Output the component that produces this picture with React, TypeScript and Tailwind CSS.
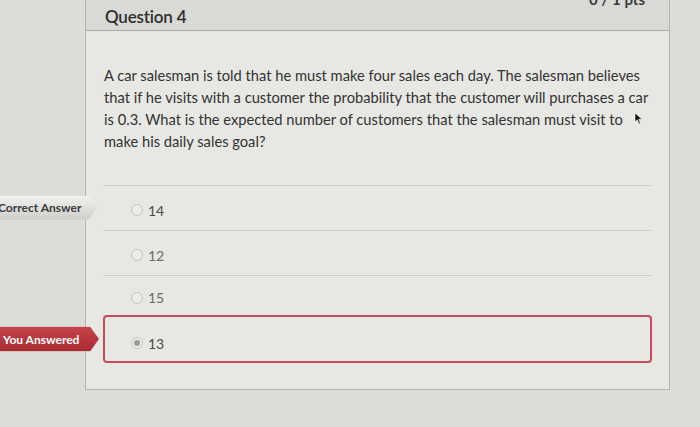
import React from 'react'

const answers = [
  { value: '14', badge: 'correct' },
  { value: '12' },
  { value: '15' },
  { value: '13', badge: 'you', selected: true },
]

function Radio({ selected }: { selected?: boolean }) {
  return (
    <span className="flex h-[12px] w-[12px] items-center justify-center rounded-full border border-[#c4c4c0] bg-[#ececE8]">
      {selected && <span className="h-[6px] w-[6px] rounded-full bg-[#9a9a96]" />}
    </span>
  )
}

function Badge({ kind }: { kind: string }) {
  if (kind === 'correct') {
    return (
      <div className="absolute left-[-110px] top-1/2 flex h-[24px] w-[104px] -translate-y-1/2 items-center bg-gradient-to-b from-[#f2f2f0] to-[#cdcdc9] pl-[5px] text-[12px] font-bold text-[#3c3c3c] [clip-path:polygon(0_0,calc(100%-9px)_0,100%_50%,calc(100%-9px)_100%,0_100%)]">
        Correct Answer
      </div>
    )
  }
  return (
    <div className="absolute left-[-110px] top-1/2 flex h-[25px] w-[104px] -translate-y-1/2 items-center bg-gradient-to-b from-[#c6434a] to-[#a92a32] pl-[8px] text-[12px] font-bold text-white [clip-path:polygon(0_0,calc(100%-9px)_0,100%_50%,calc(100%-9px)_100%,0_100%)]">
      You Answered
    </div>
  )
}

export default function App() {
  return (
    <div
      className="relative h-[427px] w-[700px] overflow-hidden bg-[#dcdcd8] pl-[85px] pr-[30px]"
      style={{ fontFamily: 'Lato, "Open Sans", sans-serif' }}
    >
      <div className="border-x border-b border-[#b4b4b0] bg-[#e7e7e3]">
        {/* header */}
        <div className="flex h-[31px] items-start justify-between border-b border-[#a9a9a5] bg-[#d9d9d5] pl-[19px] pr-[24px]">
          <span className="mt-[4px] text-[17px] font-semibold tracking-[-0.2px] text-[#2e2e2e]">Question 4</span>
          <span className="-mt-[12px] text-[15px] font-bold text-[#3a3a3a]">0 / 1 pts</span>
        </div>

        {/* question */}
        <div className="relative px-[18px] pb-[33px] pt-[33px] text-[14.7px] leading-[22px] text-[#333]">
          <p className="whitespace-nowrap">
            A car salesman is told that he must make four sales each day. The salesman believes
            <br />
            that if he visits with a customer the probability that the customer will purchases a car
            <br />
            is 0.3. What is the expected number of customers that the salesman must visit to
            <br />
            make his daily sales goal?
          </p>
          <svg
            className="absolute left-[548px] top-[81px]"
            width="9"
            height="13"
            viewBox="0 0 9 13"
          >
            <path d="M1 1 L1 10 L3.3 7.8 L5 12 L6.4 11.4 L4.8 7.3 L8 7.3 Z" fill="#111" stroke="#fff" strokeWidth="0.6" />
          </svg>
        </div>

        {/* answers */}
        <div className="mx-[17px] pb-[26px]">
          {answers.map((a, i) => {
            const you = a.badge === 'you'
            return (
              <div
                key={a.value}
                className={
                  you
                    ? 'relative flex h-[48px] items-center rounded-[4px] border-2 border-[#c8495a] pl-[26px] pt-[8px]'
                    : i === 2
                      ? 'relative flex h-[40px] items-center border-t border-[#cdcdc9] pl-[28px] pt-[4px]'
                      : 'relative flex h-[45px] items-center border-t border-[#cdcdc9] pl-[28px] pt-[4px]'
                }
              >
                {a.badge && <Badge kind={a.badge} />}
                <Radio selected={a.selected} />
                <span className={i === 0 || you ? 'ml-[5px] text-[14px] text-[#4a4a4a]' : 'ml-[5px] text-[14px] text-[#6a6a6a]'}>
                  {a.value}
                </span>
              </div>
            )
          })}
        </div>
      </div>
    </div>
  )
}
